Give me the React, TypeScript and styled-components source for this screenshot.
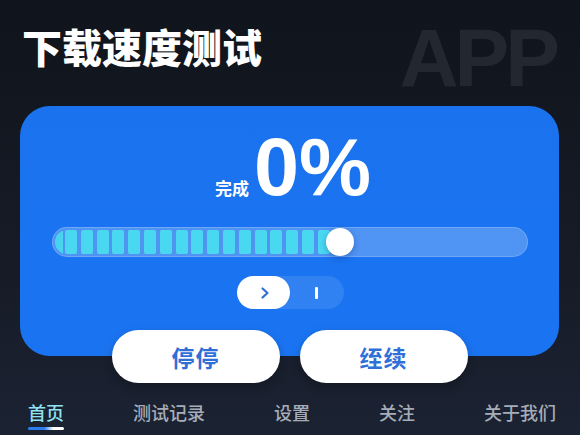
import styled, { createGlobalStyle } from "styled-components";

const GlobalStyle = createGlobalStyle`
    html, body {
        margin: 0;
        padding: 0;
        background: #12161f;
    }
    * {
        box-sizing: border-box;
    }
`;

const SEGMENTS = 18;

const App = () => {
    return (
        <Page>
            <GlobalStyle />
            <Header>
                <Title>下载速度测试</Title>
                <Watermark>APP</Watermark>
            </Header>
            <Card>
                <PercentRow>
                    <Label>完成</Label>
                    <Percent>0%</Percent>
                </PercentRow>
                <Track>
                    <Fill>
                        {Array.from({ length: SEGMENTS }).map((_, i) => (
                            <Segment key={i} />
                        ))}
                    </Fill>
                    <Knob />
                </Track>
                <Toggle>
                    <ToggleOn>
                        <svg width="12" height="14" viewBox="0 0 12 14">
                            <path d="M3.5 2.5 L8.5 7 L3.5 11.5" fill="none" stroke="#2f6fd6" strokeWidth="2.2" strokeLinecap="round" strokeLinejoin="round" />
                        </svg>
                    </ToggleOn>
                    <ToggleOff>
                        <Bar />
                    </ToggleOff>
                </Toggle>
            </Card>
            <Buttons>
                <ActionButton>停停</ActionButton>
                <ActionButton>绖续</ActionButton>
            </Buttons>
            <Nav>
                <NavItem $active>首页</NavItem>
                <NavItem>测试记录</NavItem>
                <NavItem>设置</NavItem>
                <NavItem>关注</NavItem>
                <NavItem>关于我们</NavItem>
            </Nav>
        </Page>
    );
};

export default App;

const Page = styled.div`
    width: 580px;
    height: 435px;
    overflow: hidden;
    background: linear-gradient(180deg, #10141c 0%, #161b26 60%, #1b2232 100%);
    font-family: "Noto Sans CJK SC", "Noto Sans", sans-serif;
`;

const Header = styled.div`
    height: 106px;
    display: flex;
    justify-content: space-between;
    align-items: flex-start;
    padding: 26px 24px 0 22px;
`;

const Title = styled.h1`
    margin: 0;
    font-size: 40px;
    line-height: 40px;
    font-weight: 900;
    color: #ffffff;
`;

const Watermark = styled.div`
    margin-top: -9px;
    font-family: "Liberation Sans", Arial, sans-serif;
    font-weight: 700;
    font-size: 82px;
    line-height: 82px;
    letter-spacing: -4px;
    color: #23272f;
`;

const Card = styled.div`
    margin: 0 21px 0 20px;
    height: 250px;
    border-radius: 30px;
    background: linear-gradient(180deg, #1a72ee 0%, #1a74f2 100%);
    padding: 21px 31px 0 32px;
    display: flex;
    flex-direction: column;
    align-items: center;
`;

const PercentRow = styled.div`
    display: flex;
    align-items: baseline;
    gap: 5px;
    height: 81px;
    margin-left: 6px;
`;

const Label = styled.span`
    font-size: 17px;
    font-weight: 700;
    color: #ffffff;
`;

const Percent = styled.span`
    font-family: "Liberation Sans", Arial, sans-serif;
    font-size: 81px;
    line-height: 81px;
    font-weight: 700;
    color: #ffffff;
`;

const Track = styled.div`
    position: relative;
    margin-top: 19px;
    width: 100%;
    height: 30px;
    border-radius: 15px;
    background: rgba(255, 255, 255, 0.24);
    border: 1px solid rgba(255, 255, 255, 0.18);
    padding: 2px;
`;

const Fill = styled.div`
    display: flex;
    gap: 3.8px;
    width: 284px;
    height: 100%;
    padding-left: 10px;
    border-radius: 12px 0 0 12px;
    overflow: hidden;
    background: linear-gradient(90deg, #48d4ee 0 8px, transparent 8px);
`;

const Segment = styled.div`
    flex: 0 0 12px;
    height: 100%;
    border-radius: 2px;
    background: #4ad8f1;
`;

const Knob = styled.div`
    position: absolute;
    left: 273px;
    top: 50%;
    width: 28px;
    height: 28px;
    margin-top: -14px;
    border-radius: 50%;
    background: #ffffff;
    box-shadow: 0 2px 6px rgba(0, 40, 120, 0.35);
`;

const Toggle = styled.div`
    margin-top: 19px;
    display: flex;
    width: 107px;
    height: 33px;
    border-radius: 17px;
    background: rgba(255, 255, 255, 0.1);
`;

const ToggleOn = styled.div`
    width: 53px;
    height: 100%;
    border-radius: 17px;
    background: #ffffff;
    display: flex;
    align-items: center;
    justify-content: center;
    padding-left: 4px;
`;

const ToggleOff = styled.div`
    flex: 1;
    display: flex;
    align-items: center;
    justify-content: center;
    padding-right: 1px;
`;

const Bar = styled.div`
    width: 3px;
    height: 12px;
    border-radius: 1px;
    background: #ffffff;
`;

const Buttons = styled.div`
    margin-top: -26px;
    display: flex;
    justify-content: center;
    gap: 20px;
    padding-right: 1px;
`;

const ActionButton = styled.button`
    width: 168px;
    height: 53px;
    border: none;
    border-radius: 27px;
    background: #ffffff;
    color: #2f70d8;
    font-family: "Noto Sans CJK SC", "Noto Sans", sans-serif;
    font-size: 23px;
    font-weight: 700;
    letter-spacing: 1px;
    box-shadow: 0 4px 10px rgba(0, 0, 0, 0.25);
    cursor: pointer;
`;

const Nav = styled.div`
    margin-top: 17px;
    display: flex;
    gap: 69px;
    padding-left: 28px;
    white-space: nowrap;
`;

const NavItem = styled.div<{ $active?: boolean }>`
    position: relative;
    font-size: 18px;
    line-height: 25px;
    font-weight: 500;
    color: ${(p) => (p.$active ? "#8fe3f2" : "#a6adb8")};

    &::after {
        content: "";
        display: ${(p) => (p.$active ? "block" : "none")};
        position: absolute;
        left: 0;
        right: 0;
        bottom: -5px;
        height: 3px;
        border-radius: 2px;
        background: linear-gradient(90deg, #2b7cf0 0%, #2b7cf0 45%, #ffffff 70%, #ffffff 100%);
    }
`;
